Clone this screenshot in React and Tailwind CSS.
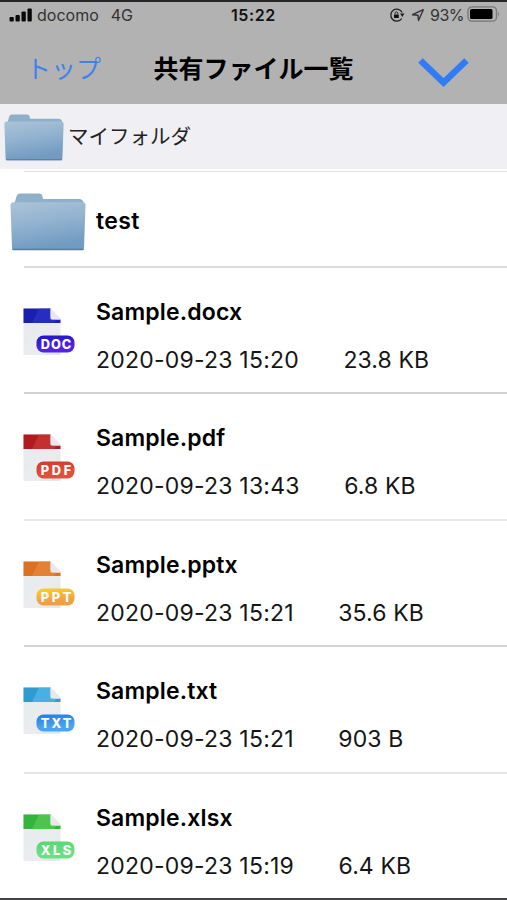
import React from 'react'

const files = [
    { name: 'Sample.docx', date: '2020-09-23 15:20', size: '23.8 KB', label: 'DOC', line: 'border-[#dbdbdd]', dark: '#1b1fae', light: '#3038cf', badge: '#2517cf', badgeEnd: '#5423dd' },
    { name: 'Sample.pdf', date: '2020-09-23 13:43', size: '6.8 KB', label: 'PDF', line: 'border-[#d3d3d5]', dark: '#b01b20', light: '#cf4340', badge: '#d63a2e', badgeEnd: '#e2503c' },
    { name: 'Sample.pptx', date: '2020-09-23 15:21', size: '35.6 KB', label: 'PPT', line: 'border-[#e6e6e8]', dark: '#dc7122', light: '#e98f47', badge: '#f8cc2a', badgeEnd: '#f0a044' },
    { name: 'Sample.txt', date: '2020-09-23 15:21', size: '903 B', label: 'TXT', line: 'border-[#d3d3d5]', dark: '#2f9bd0', light: '#5fc3ee', badge: '#2b7fe6', badgeEnd: '#48a5f5' },
    { name: 'Sample.xlsx', date: '2020-09-23 15:19', size: '6.4 KB', label: 'XLS', line: 'border-[#e6e6e8]', dark: '#35b43c', light: '#63d05f', badge: '#58d873', badgeEnd: '#6be083' },
]

function FolderIcon({ id, className }) {
    return (
        <svg viewBox="0 0 76 58" preserveAspectRatio="none" className={className}>
            <defs>
                <linearGradient id={id} x1="0" y1="0" x2="0.25" y2="1">
                    <stop offset="0" stopColor="#abc3d7" />
                    <stop offset="0.5" stopColor="#91b2d0" />
                    <stop offset="1" stopColor="#719bc1" />
                </linearGradient>
            </defs>
            <path d="M4 12 L6.500 3.500 Q7.500 0.500 10 0.500 H29 Q32 0.500 32.500 3.500 L33 6 H69 Q73 6 73.500 9.500 L75 12Z" fill="#8fb0ca" />
            <path d="M0.500 12 Q0.500 9.500 3 9.500 H73 Q75.500 9.500 75.500 12 L74 55 Q74 57 72 57 H4 Q2 57 2 55Z" fill={`url(#${id})`} />
            <path d="M2 10 H74" stroke="#a9c2d6" strokeWidth="0.800" />
            <path d="M3 56.500 H73" stroke="#587b9b" strokeWidth="1.400" strokeLinecap="round" />
        </svg>
    )
}

function FileIcon({ file }) {
    const id = file.label
    return (
        <svg viewBox="0 0 52 48" className="w-[52px] h-12">
            <defs>
                <linearGradient id={`${id}-page`} x1="0" y1="0" x2="1" y2="1">
                    <stop offset="0" stopColor="#e2ebef" />
                    <stop offset="0.6" stopColor="#ececee" />
                    <stop offset="1" stopColor="#dce9ea" />
                </linearGradient>
                <linearGradient id={`${id}-badge`} x1="0" y1="0" x2="0.2" y2="1">
                    <stop offset="0.1" stopColor={file.badge} />
                    <stop offset="0.8" stopColor={file.badgeEnd} />
                </linearGradient>
            </defs>
            <path d="M0.500 0.500 H28 L37.500 10 V47 H0.500Z" fill={`url(#${id}-page)`} />
            <path d="M0.500 0.500 H27.500 V11.500 H37.500 V15 H0.500Z" fill={file.dark} />
            <path d="M16 0.500 H27.500 V11.500 H34 L31 15 H9Z" fill={file.light} opacity="0.55" />
            <path d="M27.500 0.500 L37.500 11.500 H30 Q27.500 11.500 27.500 9Z" fill="#e9e9ed" />
            <rect x="13.500" y="27.500" width="38" height="17" rx="7" fill={`url(#${id}-badge)`} />
            <text x="17.800" y="40.600" textLength="30.500" fontSize="12.800" fontWeight="800" fill="#fff" fontFamily="Inter, sans-serif">{file.label}</text>
        </svg>
    )
}

function StatusBar() {
    return (
        <div className="relative flex items-center h-[26px] text-[16px] text-[#333]">
            <svg viewBox="0 0 24 15" className="w-6 h-[15px] ml-[9px]" fill="#090909">
                <rect x="0.500" y="9" width="4.300" height="4.500" rx="1" />
                <rect x="6.500" y="7" width="4.300" height="6.500" rx="1" />
                <rect x="12.500" y="3.500" width="4.300" height="10" rx="1" />
                <rect x="18.500" y="0.500" width="4.300" height="13" rx="1" />
            </svg>
            <span className="ml-1 tracking-[0px]">docomo</span>
            <span className="ml-3 tracking-[-0.1px]">4G</span>
            <span className="absolute left-[231px] font-semibold text-[#111] tracking-[0.6px]">15:22</span>
            <div className="flex items-center ml-auto pr-[6px]">
                {/* Orientation lock */}
                <svg viewBox="0 0 16 16" className="w-4 h-4" fill="none" stroke="#222" strokeWidth="1.300">
                    <path d="M12.800 11.500 A6 6 0 1 1 13.200 5.500" />
                    <path d="M11 6.500 H15.500 L13.300 10Z" fill="#222" stroke="none" />
                    <rect x="5" y="7.500" width="4.800" height="3.500" rx="0.500" fill="#111" stroke="none" />
                    <path d="M6 7.500 V6.300 A1.400 1.400 0 0 1 8.800 6.300 V7.500" strokeWidth="1" />
                </svg>
                <svg viewBox="0 0 14 14" className="w-3.5 h-3.5 ml-[6px]" fill="none" stroke="#333" strokeWidth="1.400" strokeLinejoin="round">
                    <path d="M1.500 6.700 L12.300 1.700 L7.500 12.500 L7 7.200Z" />
                </svg>
                <span className="ml-[5px] tracking-[-0.5px]">93%</span>
                <svg viewBox="0 0 34 16" className="w-[34px] h-4 ml-[3px] -mt-[2px]">
                    <rect x="1" y="0.800" width="28.500" height="14.400" rx="4" fill="none" stroke="#777" strokeWidth="1.300" />
                    <rect x="3" y="3" width="22.500" height="10" rx="1.500" fill="#000" />
                    <path d="M31.200 5.500 Q33.200 8 31.200 10.500Z" fill="#777" />
                </svg>
            </div>
        </div>
    )
}

export default function App() {
    return (
        <div className="w-[507px] h-[900px] overflow-hidden bg-white font-['Inter','Noto_Sans_CJK_JP',sans-serif] text-black flex flex-col">
            {/* Header */}
            <header className="h-[104px] shrink-0 bg-[#b2b2b2] border-t-2 border-[#252528]">
                <StatusBar />
                <div className="flex items-center h-[76px] pt-2">
                    <span className="w-[140px] pl-[26px] text-[25px] text-[#3f82ee]">トップ</span>
                    <h1 className="w-[227px] text-center text-[25px] font-bold whitespace-nowrap">共有ファイル一覧</h1>
                    <svg viewBox="0 0 52 30" className="w-[52px] h-[30px] ml-[51px] mt-[6px]" fill="none" stroke="#327bf6" strokeWidth="6.500">
                        <path d="M2.500 2.500 L25.500 24.500 L48.500 2.500" />
                    </svg>
                </div>
            </header>

            {/* Current folder */}
            <div className="flex items-center h-[65px] shrink-0 bg-[#efeff4] pl-1">
                <FolderIcon id="root-folder" className="w-[60px] h-[47px] mt-px" />
                <span className="ml-1 mt-0.5 text-[20.5px] text-[#222]">マイフォルダ</span>
            </div>

            <div className="h-[3px] shrink-0 ml-6 border-b border-[#dededf]"></div>
            <div className="flex items-center h-[94px] shrink-0 pl-[10px]">
                <FolderIcon id="test-folder" className="w-[76px] h-[58px] mt-[5px]" />
                <span className="ml-[10px] mt-1 text-[23px] font-semibold tracking-[0.4px]">test</span>
            </div>

            {/* File list */}
            <ul className="shrink-0">
                {files.map((file) => (
                    <li key={file.name} className={`h-[126.4px] ml-6 border-t-2 flex ${file.line}`}>
                        <div className="w-[72px] pt-10 -ml-px mr-px">
                            <FileIcon file={file} />
                        </div>
                        <div className="pt-7 whitespace-nowrap">
                            <p className="text-[23px] leading-[32px] font-semibold tracking-[0.15px]">{file.name}</p>
                            <p className="mt-4 flex gap-[44.5px] text-[23px] leading-[32px] tracking-[0.22px] text-[#151515]">
                                <span>{file.date}</span>
                                <span className="tracking-[0.1px]">{file.size}</span>
                            </p>
                        </div>
                    </li>
                ))}
            </ul>
            <div className="h-[3px] shrink-0 bg-[#444448]"></div>
        </div>
    )
}
